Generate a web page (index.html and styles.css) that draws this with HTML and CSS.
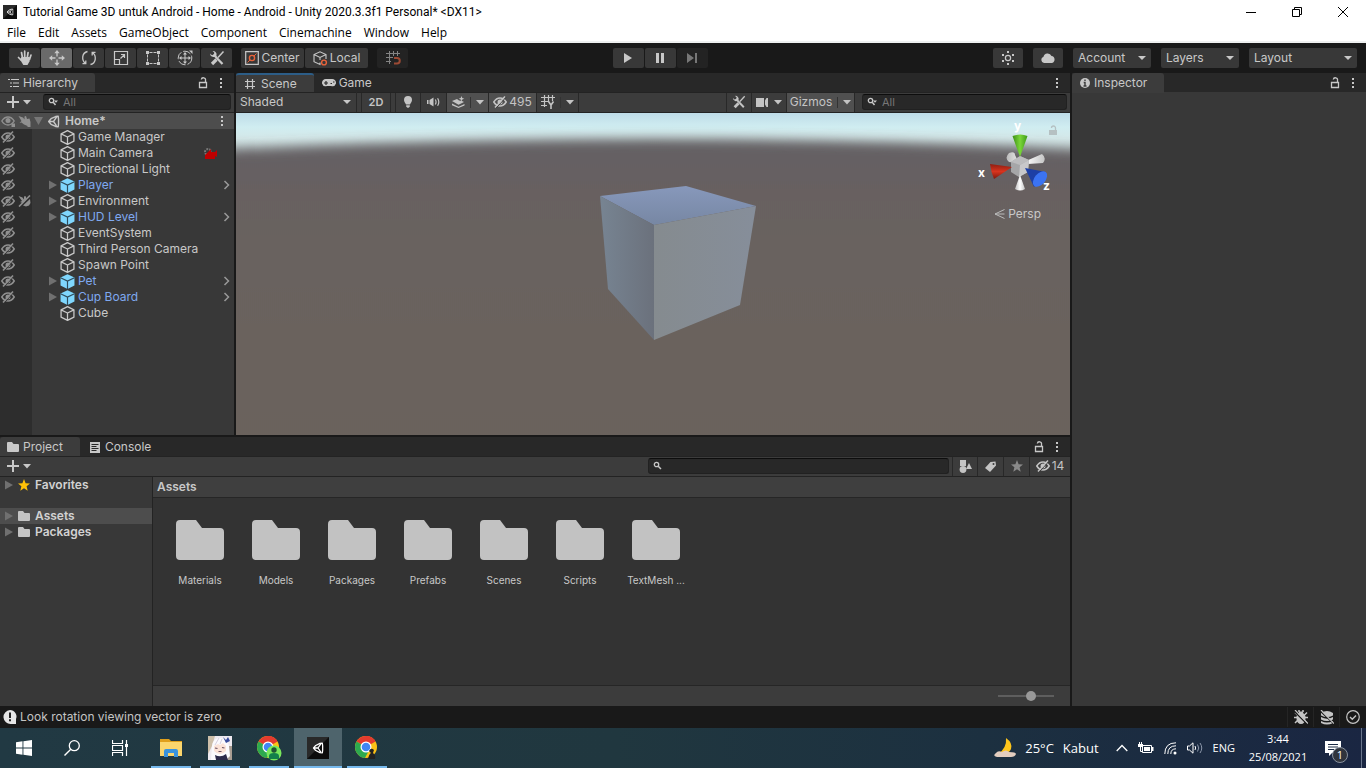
FILE: index.html
```html
<!DOCTYPE html>
<html lang="en">
<head>
<meta charset="utf-8">
<title>Tutorial Game 3D untuk Android - Home - Android - Unity 2020.3.3f1 Personal* &lt;DX11&gt;</title>
<link rel="stylesheet" href="styles.css">
</head>
<body>
<svg class="defs" aria-hidden="true">
  <symbol id="unity" viewBox="0 0 16 16"><g fill="none" stroke="currentColor" stroke-width="1.7" stroke-linejoin="round"><path d="M5 4.600 10.600 1.900l3.200-.3.400 3.400v6l-.4 3.400-3.200-.3L5 11.400 2 8zM8 8H2.500M8 8l3.800-5.500M8 8l3.800 5.500"/></g></symbol>
  <symbol id="lock" viewBox="0 0 10 12"><path d="M1.500 5.500h7v5h-7zM7.500 5.500V3.300a2 2 0 0 0-4.200-.8" fill="none" stroke="currentColor" stroke-width="1.300"/></symbol>
  <symbol id="dots" viewBox="0 0 4 12"><path d="M1 1h2v2H1zM1 5h2v2H1zM1 9h2v2H1z" fill="currentColor"/></symbol>
  <symbol id="plus" viewBox="0 0 12 12"><path d="M6 0v12M0 6h12" stroke="currentColor" stroke-width="2"/></symbol>
  <symbol id="down" viewBox="0 0 8 5"><path d="M0 0h8L4 4.600z" fill="currentColor"/></symbol>
  <symbol id="right" viewBox="0 0 8 10"><path d="M0 .5v9L8 5z" fill="currentColor"/></symbol>
  <symbol id="chev" viewBox="0 0 7 10"><path d="M1.500 1 5.500 5l-4 4" fill="none" stroke="currentColor" stroke-width="1.500"/></symbol>
  <symbol id="mag" viewBox="0 0 10 10"><circle cx="3.500" cy="3.500" r="2.200" fill="none" stroke="currentColor" stroke-width="1.300"/><path d="M5.200 5.200 8 8" stroke="currentColor" stroke-width="1.500"/></symbol>
  <symbol id="magd" viewBox="0 0 10 10"><circle cx="3.500" cy="3.500" r="2.200" fill="none" stroke="currentColor" stroke-width="1.300"/><path d="M5.200 5.200 7.500 8" stroke="currentColor" stroke-width="1.500"/><path d="M6 3.500h4L8 5.700z" fill="currentColor"/></symbol>
  <symbol id="cube" viewBox="0 0 14 14"><path d="M7 .6 13 3.600v6.800L7 13.400 1 10.400V3.600zM1 3.600 7 6.500l6-2.900M7 6.500v6.900" fill="none" stroke="currentColor" stroke-width="1.200" stroke-linejoin="round"/></symbol>
  <symbol id="prefab" viewBox="0 0 14 14"><path d="M7 .2 13.500 3.300v7.500L7 14 .5 10.800V3.300z" fill="#7fd6fd"/><path d="M.5 3.500 7 6.600l6.500-3.100M7 6.600V14" fill="none" stroke="#2f4c5c" stroke-width="1.100"/></symbol>
  <symbol id="eye" viewBox="0 0 14 12"><path d="M.8 6C2.500 3.300 4.600 2 7 2s4.500 1.300 6.200 4C11.500 8.700 9.400 10 7 10S2.500 8.700.8 6z" fill="none" stroke="currentColor" stroke-width="1.400"/><circle cx="7" cy="5.500" r="2.500" fill="currentColor"/><path d="M10.500 8.500h3.500V12h-3.500z" fill="currentColor"/></symbol>
  <symbol id="eyeoff" viewBox="0 0 14 12"><path d="M.8 6C2.500 3.300 4.600 2 7 2s4.500 1.300 6.200 4C11.500 8.700 9.400 10 7 10S2.500 8.700.8 6z" fill="none" stroke="currentColor" stroke-width="1.500"/><circle cx="7" cy="6" r="2.500" fill="currentColor"/><path d="M3.200 11.900 13 1.200" stroke="#333" stroke-width="1"/><path d="M2 11.500 12 .5" stroke="currentColor" stroke-width="1.500"/></symbol>
  <symbol id="pick" viewBox="0 0 13 12"><path d="M.5 1 5 2.500 6.500 4.500V1.500L8 1l1 3 2.500-.5 1 3.500v5H9.500V11L6 9.500 3.500 7.500 1.500 8l2-2z" fill="currentColor"/></symbol>
  <symbol id="pickoff" viewBox="0 0 13 12"><path d="M.5 1 4.500 2.500 6 4.500V1.500L7.500 1l1 2.500L7 6 4.500 8 2 7l2-1zM12 4l.5 4-1.500 2.500-3 1-3-1z" fill="currentColor"/><path d="M1 11.500 12 .5" stroke="currentColor" stroke-width="1.600"/></symbol>
  <symbol id="folder" viewBox="0 0 48 40"><path d="M4 0h16l6 8h18a4 4 0 0 1 4 4v24a4 4 0 0 1-4 4H4a4 4 0 0 1-4-4V4a4 4 0 0 1 4-4z" fill="currentColor"/></symbol>
  <symbol id="star" viewBox="0 0 12 12"><path d="M6 0 7.600 4.200 12 4.500 8.600 7.300 9.700 11.800 6 9.300l-3.700 2.500 1.100-4.500L0 4.500l4.400-.3z" fill="currentColor"/></symbol>
  <symbol id="tools" viewBox="0 0 16 16"><path d="M4.500 4.500 13.500 14" stroke="currentColor" stroke-width="2.200"/><path d="M1 3.500 3 5.200 5 4.500 5.200 2.500 3.500 1a3.600 3.600 0 0 1 4 4.500A3.600 3.600 0 0 1 1 3.500z" fill="currentColor"/><path d="M14.500 1.500 9 7.500" stroke="currentColor" stroke-width="1.500"/><path d="M7.500 9.500 3 14" stroke="currentColor" stroke-width="3.200"/></symbol>
  <symbol id="chrome" viewBox="0 0 24 24"><circle cx="12" cy="12" r="11" fill="#fbc116"/><path d="M12 12 2.500 6.500A11 11 0 0 1 21.500 6.500z" fill="#e33b2e"/><path d="M2.500 6.500A11 11 0 0 0 11 23l4.500-8.500L12 12z" fill="#2da94f"/><path d="M12 1A11 11 0 0 1 21.500 6.500H12z" fill="#e33b2e"/><circle cx="12" cy="12" r="5.500" fill="#fff"/><circle cx="12" cy="12" r="4.300" fill="#3f86f4"/></symbol>
  <symbol id="unityapp" viewBox="0 0 22 22"><path d="M0 0h22v22H0z" fill="#0c0c0c"/><path d="M0 0h22L0 22z" fill="#292929"/><svg x="5" y="5" width="12" height="12"><use href="#unity"/></svg></symbol>
</svg>

<header class="titlebar">
  <svg class="app-icon"><use href="#unityapp"/></svg>
  <h1>Tutorial Game 3D untuk Android - Home - Android - Unity 2020.3.3f1 Personal* &lt;DX11&gt;</h1>
  <div class="win-buttons">
    <button aria-label="Minimize"><svg width="12" height="12" viewBox="0 0 12 12"><path d="M1 6.500h10" stroke="#000"/></svg></button>
    <button aria-label="Restore"><svg width="12" height="12" viewBox="0 0 12 12"><path d="M1.500 3.500h7v7h-7zM3.500 3.500v-2h7v7h-2" fill="none" stroke="#000"/></svg></button>
    <button aria-label="Close"><svg width="12" height="12" viewBox="0 0 12 12"><path d="m1 1 10 10M11 1 1 11" stroke="#000"/></svg></button>
  </div>
</header>
<nav class="menubar">
  <button>File</button><button>Edit</button><button>Assets</button><button>GameObject</button><button>Component</button><button>Cinemachine</button><button>Window</button><button>Help</button>
</nav>

<div class="toolbar">
  <div class="group">
    <button class="tool" aria-label="Hand"><svg width="16" height="16" viewBox="0 0 16 16"><path d="M5.500 8 4.500 2.500M7.700 7.500V1.200M10.200 8l.9-5.500M12.500 9.500 14 5M4 10 1.500 7.500" stroke="currentColor" stroke-width="1.700" stroke-linecap="round"/><path d="M4.500 7h8.300l-.3 4.500L10.500 15H6.300L3 9.500z" fill="currentColor"/></svg></button>
    <button class="tool active" aria-label="Move"><svg width="16" height="16" viewBox="0 0 16 16"><path d="M8 2v4.500M8 9.500V14M2 8h4.500M9.500 8H14" stroke="currentColor" stroke-width="1.300"/><path d="M8 0 5.300 3.200h5.400zM8 16l-2.700-3.200h5.400zM0 8l3.200-2.700v5.400zM16 8l-3.200-2.700v5.400z" fill="currentColor"/></svg></button>
    <button class="tool" aria-label="Rotate"><svg width="16" height="16" viewBox="0 0 16 16"><path d="M6.500 1.500C.5 3 .5 10.500 4.500 13.500M1.500 13.700h3.300v-3.200M9.500 14.500c6-1.500 6-9 2-12M14.500 2.300h-3.300v3.200" fill="none" stroke="currentColor" stroke-width="1.300"/></svg></button>
    <button class="tool" aria-label="Scale"><svg width="16" height="16" viewBox="0 0 16 16"><path d="M1.500 1.500h13v13h-13zM1.500 9.500h5v5M7.500 8.500l4-4M8 4.500h3.500V8" fill="none" stroke="currentColor" stroke-width="1.200"/></svg></button>
    <button class="tool" aria-label="Rect"><svg width="16" height="16" viewBox="0 0 16 16"><path d="M4.500 2.500h7M4.500 13.500h7M2.500 4.500v7M13.500 4.500v7" stroke="currentColor" stroke-dasharray="3 1"/><path d="M1 1h3v3H1zM12 1h3v3h-3zM1 12h3v3H1zM12 12h3v3h-3z" fill="currentColor"/></svg></button>
    <button class="tool" aria-label="Transform"><svg width="16" height="16" viewBox="0 0 16 16"><circle cx="8" cy="8" r="6.800" fill="none" stroke="currentColor" stroke-dasharray="8 2"/><path d="M8 3v10M3 8h10" stroke="currentColor"/><path d="M8 2 6 4.500h4zM8 14l-2-2.500h4zM2 8l2.500-2v4zM14 8l-2.500-2v4zM12 .5h3.500V4z" fill="currentColor"/></svg></button>
    <button class="tool" aria-label="Custom tools"><svg width="16" height="16"><use href="#tools"/></svg></button>
  </div>
  <div class="group pivot">
    <button class="wide"><svg width="14" height="14" viewBox="0 0 14 14"><path d="M.7.7h12.600v12.600H.7z" fill="none" stroke="currentColor" stroke-width="1.200"/><circle cx="7" cy="7" r="2.600" fill="none" stroke="#e9633a" stroke-width="1.400"/><path d="M9 5l2.500-2.500M5 9l-2.500 2.500" stroke="#e9633a"/></svg>Center</button>
    <button class="wide"><svg width="15" height="15" viewBox="0 0 15 15"><path d="M7 11.500v2L1 10.700V3.500L7 .8l6 2.700V8M1 3.500l6 3 6-3M7 6.500V9" fill="none" stroke="currentColor" stroke-width="1.100"/><circle cx="11" cy="11.500" r="2.400" fill="none" stroke="#e9633a" stroke-width="1.400"/></svg>Local</button>
  </div>
  <button class="tool dim" aria-label="Grid snapping"><svg width="16" height="16" viewBox="0 0 16 16"><path d="M4.500 1v13M8.500 1v5M12.500 1v5M1 3.500h14M1 7.500h7M1 11.500h5" stroke="#858585"/><path d="M9 8h3a2.500 2.500 0 0 1 0 5.500H9" fill="none" stroke="#9c4a34" stroke-width="2"/></svg></button>
  <div class="group play">
    <button class="tool" aria-label="Play"><svg width="10" height="12" viewBox="0 0 10 12"><path d="M1 1v10l8-5z" fill="currentColor"/></svg></button>
    <button class="tool" aria-label="Pause"><svg width="10" height="12" viewBox="0 0 10 12"><path d="M1 1h3v10H1zM6 1h3v10H6z" fill="currentColor"/></svg></button>
    <button class="tool dim" aria-label="Step"><svg width="12" height="12" viewBox="0 0 12 12"><path d="M1 1v10l7-5zM9 1h2v10H9z" fill="#777"/></svg></button>
  </div>
  <div class="group services">
    <button class="tool" aria-label="Collaborate"><svg width="16" height="16" viewBox="0 0 16 16"><circle cx="8" cy="8" r="2.600" fill="none" stroke="currentColor" stroke-width="1.200"/><path d="M7 1h2v2H7zM7 13h2v2H7zM2 4h2v2H2zM12 4h2v2h-2zM2 10h2v2H2zM12 10h2v2h-2z" fill="currentColor"/></svg></button>
    <button class="tool" aria-label="Cloud"><svg width="16" height="12" viewBox="0 0 16 12"><path d="M4 11a3.200 3.200 0 0 1-.5-6.200A4.200 4.200 0 0 1 11.500 4 3.600 3.600 0 0 1 12 11z" fill="currentColor"/></svg></button>
    <label class="picker"><select aria-label="Account"><option>Account</option></select></label>
    <label class="picker"><select aria-label="Layers"><option>Layers</option></select></label>
    <label class="picker layout"><select aria-label="Layout"><option>Layout</option></select></label>
  </div>
</div>

<main class="workspace">
  <div class="main-col">
    <div class="upper">
      <section class="panel hierarchy">
        <div class="tabs">
          <button class="tab active"><svg width="11" height="10" viewBox="0 0 11 10"><path d="M0 1.500h2M3 1.500h8M2 5h2M5 5h6M2 8.500h2M5 8.500h6" stroke="currentColor" stroke-width="1.200"/></svg>Hierarchy</button>
          <div class="tab-actions"><svg width="10" height="12"><use href="#lock"/></svg><svg width="4" height="12"><use href="#dots"/></svg></div>
        </div>
        <div class="bar">
          <button class="add" aria-label="Create"><svg width="12" height="12"><use href="#plus"/></svg><svg width="8" height="5"><use href="#down"/></svg></button>
          <label class="search"><svg width="10" height="10"><use href="#magd"/></svg><input type="text" placeholder="All" aria-label="Search hierarchy"></label>
        </div>
        <div class="row scene-row"><span class="gutter"><svg width="14" height="12"><use href="#eye"/></svg><svg width="13" height="12"><use href="#pick"/></svg></span><svg class="fold-open" width="9" height="8" viewBox="0 0 9 8"><path d="M0 0h9L4.500 8z" fill="#777"/></svg><svg class="scene-logo" width="13" height="13"><use href="#unity"/></svg><b>Home*</b><svg class="row-dots" width="4" height="12"><use href="#dots"/></svg></div>
        <ul class="tree">
          <li class="row"><span class="gutter"><svg width="14" height="12"><use href="#eyeoff"/></svg></span><span class="fold"></span><svg class="node"><use href="#cube"/></svg><span>Game Manager</span></li>
          <li class="row"><span class="gutter"><svg width="14" height="12"><use href="#eyeoff"/></svg></span><span class="fold"></span><svg class="node"><use href="#cube"/></svg><span>Main Camera</span><svg class="cine" width="15" height="13" viewBox="0 0 15 13"><circle cx="5" cy="5" r="3" fill="none" stroke="#777" stroke-width="2" stroke-dasharray="2 1"/><path d="M2 8 8 2v3h4l2-2v7l-2-1v3H2z" fill="#c00000"/></svg></li>
          <li class="row"><span class="gutter"><svg width="14" height="12"><use href="#eyeoff"/></svg></span><span class="fold"></span><svg class="node"><use href="#cube"/></svg><span>Directional Light</span></li>
          <li class="row prefab"><span class="gutter"><svg width="14" height="12"><use href="#eyeoff"/></svg></span><span class="fold"><svg width="8" height="10"><use href="#right"/></svg></span><svg class="node"><use href="#prefab"/></svg><span>Player</span><svg class="open" width="7" height="10"><use href="#chev"/></svg></li>
          <li class="row"><span class="gutter"><svg width="14" height="12"><use href="#eyeoff"/></svg><svg width="13" height="12"><use href="#pickoff"/></svg></span><span class="fold"><svg width="8" height="10"><use href="#right"/></svg></span><svg class="node"><use href="#cube"/></svg><span>Environment</span></li>
          <li class="row prefab"><span class="gutter"><svg width="14" height="12"><use href="#eyeoff"/></svg></span><span class="fold"><svg width="8" height="10"><use href="#right"/></svg></span><svg class="node"><use href="#prefab"/></svg><span>HUD Level</span><svg class="open" width="7" height="10"><use href="#chev"/></svg></li>
          <li class="row"><span class="gutter"><svg width="14" height="12"><use href="#eyeoff"/></svg></span><span class="fold"></span><svg class="node"><use href="#cube"/></svg><span>EventSystem</span></li>
          <li class="row"><span class="gutter"><svg width="14" height="12"><use href="#eyeoff"/></svg></span><span class="fold"></span><svg class="node"><use href="#cube"/></svg><span>Third Person Camera</span></li>
          <li class="row"><span class="gutter"><svg width="14" height="12"><use href="#eyeoff"/></svg></span><span class="fold"></span><svg class="node"><use href="#cube"/></svg><span>Spawn Point</span></li>
          <li class="row prefab"><span class="gutter"><svg width="14" height="12"><use href="#eyeoff"/></svg></span><span class="fold"><svg width="8" height="10"><use href="#right"/></svg></span><svg class="node"><use href="#prefab"/></svg><span>Pet</span><svg class="open" width="7" height="10"><use href="#chev"/></svg></li>
          <li class="row prefab"><span class="gutter"><svg width="14" height="12"><use href="#eyeoff"/></svg></span><span class="fold"><svg width="8" height="10"><use href="#right"/></svg></span><svg class="node"><use href="#prefab"/></svg><span>Cup Board</span><svg class="open" width="7" height="10"><use href="#chev"/></svg></li>
          <li class="row"><span class="gutter"></span><span class="fold"></span><svg class="node"><use href="#cube"/></svg><span>Cube</span></li>
        </ul>
      </section>

      <section class="panel scene">
        <div class="tabs">
          <button class="tab active focus"><svg width="12" height="12" viewBox="0 0 12 12"><path d="M3.500 1v10M8.500 1v10M1 3.500h10M1 8.500h10" stroke="currentColor" stroke-width="1.200"/></svg>Scene</button>
          <button class="tab game"><svg width="14" height="9" viewBox="0 0 14 9"><path d="M4 0h6a4 4 0 0 1 4 4.500A4 4 0 0 1 9 7H5A4 4 0 0 1 0 4.500 4 4 0 0 1 4 0z" fill="currentColor"/><path d="M2 4h4M4 2v4M8.500 4.500h1.500M11 3h1.500" stroke="#282828" stroke-width="1.200"/></svg>Game</button>
          <div class="tab-actions"><svg width="4" height="12"><use href="#dots"/></svg></div>
        </div>
        <div class="bar scene-bar">
          <label class="picker shading"><select aria-label="Draw mode"><option>Shaded</option></select></label>
          <button class="cell two-d"><b>2D</b></button>
          <button class="cell" aria-label="Lighting"><svg width="10" height="14" viewBox="0 0 10 14"><path d="M5 1a4 4 0 0 1 4 4c0 2-1.500 3-2 4.500H3C2.500 8 1 7 1 5a4 4 0 0 1 4-4zM3.200 10.200h3.600v1.500L5 13l-1.800-1.300z" fill="currentColor"/></svg></button>
          <button class="cell" aria-label="Audio"><svg width="13" height="10" viewBox="0 0 13 10"><path d="M0 3h1.500v4H0zM2.500 3 6.500.5v9L2.500 7z" fill="currentColor"/><path d="M8.300 2.500q1.500 2.500 0 5M10.600 1.200q2.400 3.800 0 7.600" fill="none" stroke="currentColor" stroke-width="1.200"/></svg></button>
          <button class="cell on split" aria-label="Effects"><svg width="13" height="12" viewBox="0 0 13 12"><path d="M0 5 5 3l2 1.500 3 .5 2 1-5.500 2.800zM0 7.500l6.500 3.300L12.500 8v1.500L6.500 12 0 9.200z" fill="currentColor"/><path d="m9.500 0 .8 2 2 .8-2 .8-.8 2-.8-2-2-.8 2-.8z" fill="currentColor"/></svg><i></i><svg width="8" height="5"><use href="#down"/></svg></button>
          <button class="cell on hidden-count"><svg width="14" height="12"><use href="#eyeoff"/></svg>495</button>
          <button class="cell split" aria-label="Grid"><svg width="14" height="14" viewBox="0 0 14 14"><path d="M3.500 0v12M7.500 0v6M11.500 0v6M0 2.500h14M0 6.500h8M0 10.500h6" stroke="currentColor" stroke-width="1.200"/><path d="M7.500 6.500 10 10l2.500-3.500M10 10v4" fill="none" stroke="currentColor" stroke-width="1.600"/></svg><i></i><svg width="8" height="5"><use href="#down"/></svg></button>
          <span class="grow"></span>
          <button class="cell edge" aria-label="Component tools"><svg width="14" height="14"><use href="#tools"/></svg></button>
          <button class="cell cam" aria-label="Camera"><svg width="13" height="9" viewBox="0 0 13 9"><path d="M0 0h8v9H0zM9 2.500 10.500 0H12v9h-1.500L9 6.500z" fill="currentColor"/></svg><svg width="8" height="5"><use href="#down"/></svg></button>
          <button class="cell on gizmos">Gizmos<i></i><svg width="8" height="5"><use href="#down"/></svg></button>
          <label class="search"><svg width="10" height="10"><use href="#magd"/></svg><input type="text" placeholder="All" aria-label="Search scene"></label>
        </div>
        <div class="viewport">
          <svg class="world" viewBox="0 0 834 322" preserveAspectRatio="xMidYMid slice">
            <defs>
              <linearGradient id="sky" x1="0" y1="0" x2="0" y2="1"><stop offset="0" stop-color="#bedce8"/><stop offset=".28" stop-color="#d0edf1"/><stop offset=".5" stop-color="#d4e8e9"/><stop offset="1" stop-color="#a9b2b3"/></linearGradient>
              <linearGradient id="ground" x1="0" y1="0" x2="0" y2="1"><stop offset="0" stop-color="#646064"/><stop offset=".1" stop-color="#666162"/><stop offset=".3" stop-color="#69625e"/><stop offset="1" stop-color="#6b625c"/></linearGradient>
              <linearGradient id="top" x1="0" y1="0" x2="0" y2="1"><stop offset="0" stop-color="#8798bb"/><stop offset="1" stop-color="#7787a3"/></linearGradient>
              <linearGradient id="left"><stop offset="0" stop-color="#778492"/><stop offset="1" stop-color="#6b717c"/></linearGradient>
              <linearGradient id="front"><stop offset="0" stop-color="#858b8f"/><stop offset="1" stop-color="#868e9a"/></linearGradient>
              <filter id="haze" x="-5%" y="-10%" width="110%" height="120%"><feGaussianBlur stdDeviation="6"/></filter>
            </defs>
            <path d="M0 0h834v50H0z" fill="url(#sky)"/>
            <path d="M-60 40Q417 12 894 40V380H-60z" fill="url(#ground)" filter="url(#haze)"/>
            <path d="M364 83 450 73 520 93 418 112z" fill="url(#top)"/>
            <path d="M364 83 418 112V227L372 176z" fill="url(#left)"/>
            <path d="M418 112 520 93 504 192 418 227z" fill="url(#front)"/>
          </svg>
          <div class="gizmo">
            <svg width="80" height="78" viewBox="0 0 80 78">
              <defs>
                <linearGradient id="gy"><stop offset="0" stop-color="#3c8f16"/><stop offset=".5" stop-color="#7ad63a"/><stop offset="1" stop-color="#3f9a18"/></linearGradient>
                <linearGradient id="gx" x1="0" y1="0" x2="0" y2="1"><stop offset="0" stop-color="#8e1d10"/><stop offset=".5" stop-color="#d8341e"/><stop offset="1" stop-color="#7c190d"/></linearGradient>
                <linearGradient id="gw"><stop offset="0" stop-color="#bbb"/><stop offset=".5" stop-color="#fff"/><stop offset="1" stop-color="#c4c4c4"/></linearGradient>
              </defs>
              <path d="M43 43 33 42q-5-4 0-9 6-2 6 2zM50 41 66 34q5 4 1 9l-15 1z" fill="url(#gw)"/>
              <path d="m35 42 9-6 9 4-1 12-9 5-8-5z" fill="#a6a6a8"/><path d="m35 42 9-6 9 4-9 5z" fill="#bcbcbe"/><path d="m44 45 9-5-1 12-9 5z" fill="#c8c8ca"/>
              <path d="m44 55 5 14q-5 3-10 0z" fill="url(#gw)"/>
              <path d="m44 37-7.500-21q8-3 15 0z" fill="url(#gy)"/>
              <path d="M36 47 14 44q1 8 4 15z" fill="url(#gx)"/>
              <path d="m49 48 21 4-12 15z" fill="#1d3fa5"/><ellipse cx="64" cy="59" rx="5.500" ry="9" transform="rotate(40 64 59)" fill="#3b73f2"/>
            </svg>
            <span class="axis x">x</span><span class="axis y">y</span><span class="axis z">z</span>
          </div>
          <svg class="view-lock" width="10" height="12" viewBox="0 0 10 12"><path d="M1 5h8v5H1z" fill="#b5c0c2"/><path d="M7.500 5V3a2 2 0 0 0-4 0" fill="none" stroke="#b5c0c2" stroke-width="1.300"/></svg>
          <button class="persp"><svg width="11" height="10" viewBox="0 0 11 10"><path d="M10.500.5 1 5l9.500 4.500M1 5h9.500" fill="none" stroke="#bbb"/></svg>Persp</button>
        </div>
      </section>
    </div>

    <section class="panel project">
      <div class="tabs">
        <button class="tab active"><svg width="12" height="10"><use href="#folder"/></svg>Project</button>
        <button class="tab console"><svg width="10" height="11" viewBox="0 0 10 11"><path d="M0 0h10v11H0z" fill="currentColor"/><path d="M1.500 2.500h7M1.500 4.500h5M1.500 6.500h7M1.500 8.500h5" stroke="#282828"/></svg>Console</button>
        <div class="tab-actions"><svg width="10" height="12"><use href="#lock"/></svg><svg width="4" height="12"><use href="#dots"/></svg></div>
      </div>
      <div class="bar">
        <button class="add" aria-label="Create"><svg width="12" height="12"><use href="#plus"/></svg><svg width="8" height="5"><use href="#down"/></svg></button>
        <span class="grow"></span>
        <label class="search assets-search"><svg width="10" height="10"><use href="#mag"/></svg><input type="text" aria-label="Search assets"></label>
        <button class="cell edge" aria-label="Search by type"><svg width="13" height="13" viewBox="0 0 13 13"><path d="M1 0h6v6H1z" fill="currentColor"/><path d="m10 3 3 6H7z" fill="currentColor"/><circle cx="4" cy="9.500" r="3.400" fill="currentColor"/></svg></button>
        <button class="cell" aria-label="Search by label"><svg width="12" height="11" viewBox="0 0 12 11"><path d="M5.500 1 10.500.5 11 4.500 5 11 0 7z" fill="currentColor"/><circle cx="8.500" cy="3" r="1" fill="#3c3c3c"/></svg></button>
        <button class="cell faded" aria-label="Favorite"><svg width="12" height="12"><use href="#star"/></svg></button>
        <button class="cell last"><svg width="14" height="12"><use href="#eyeoff"/></svg>14</button>
      </div>
      <div class="browser">
        <ul class="places">
          <li><svg width="8" height="10"><use href="#right"/></svg><svg class="ico gold" width="12" height="12"><use href="#star"/></svg>Favorites</li>
          <li class="selected"><svg width="8" height="10"><use href="#right"/></svg><svg class="ico" width="12" height="10"><use href="#folder"/></svg>Assets</li>
          <li><svg width="8" height="10"><use href="#right"/></svg><svg class="ico" width="12" height="10"><use href="#folder"/></svg>Packages</li>
        </ul>
        <div class="contents">
          <h2>Assets</h2>
          <ul class="grid">
            <li><svg><use href="#folder"/></svg>Materials</li>
            <li><svg><use href="#folder"/></svg>Models</li>
            <li><svg><use href="#folder"/></svg>Packages</li>
            <li><svg><use href="#folder"/></svg>Prefabs</li>
            <li><svg><use href="#folder"/></svg>Scenes</li>
            <li><svg><use href="#folder"/></svg>Scripts</li>
            <li><svg><use href="#folder"/></svg>TextMesh ...</li>
          </ul>
          <div class="foot"><input type="range" min="0" max="100" value="60" aria-label="Icon size"></div>
        </div>
      </div>
    </section>
  </div>

  <section class="panel inspector">
    <div class="tabs">
      <button class="tab active"><svg width="10" height="10" viewBox="0 0 10 10"><circle cx="5" cy="5" r="5" fill="currentColor"/><path d="M5 1.500v1.500M3.700 4.500H5V8M3.500 8h3" stroke="#3c3c3c" stroke-width="1.400" fill="none"/></svg>Inspector</button>
      <div class="tab-actions"><svg width="10" height="12"><use href="#lock"/></svg><svg width="4" height="12"><use href="#dots"/></svg></div>
    </div>
  </section>
</main>

<footer class="status">
  <svg width="14" height="15" viewBox="0 0 14 15"><path d="M7 0a6.500 6.500 0 0 1 6 9v5H8A6.600 6.600 0 1 1 7 0z" fill="#e6e6e6"/><path d="M7 2.500v5.500M7 9.300v2" stroke="#222" stroke-width="2"/></svg>
  <span class="message">Look rotation viewing vector is zero</span>
  <button aria-label="Debugger"><svg width="14" height="15" viewBox="0 0 14 15"><path d="M7 2.500a5 5 0 0 1 4.500 6 4.500 5.500 0 0 1-9 0A5 5 0 0 1 7 2.500zM4.500 1.500h5L8.500 4h-3z" fill="currentColor"/><path d="M0 7.500h14M1 2.500l3 3M13 2.500l-3 3M1 13l3-3M13 13l-3-3M5 0v2M9 0v2" stroke="currentColor" stroke-width="1.500"/><path d="m0 1 13 13" stroke="#191919" stroke-width="1.500"/><path d="m1 0 13 13.500" stroke="currentColor" stroke-width="1.200"/></svg></button>
  <button aria-label="Cache server"><svg width="14" height="15" viewBox="0 0 14 15"><path d="M1 3q6-4 12 0v2.500q-6 3-12 0zM1 7q6 3.500 12 0v2.500q-6 3-12 0zM1 11q6 3 12 0v2q-6 3-12 0z" fill="currentColor"/><path d="m0 1 14 13" stroke="#191919" stroke-width="1.200"/><path d="m1 0 13 13.500" stroke="currentColor" stroke-width="1.200"/></svg></button>
  <button aria-label="Progress"><svg width="14" height="14" viewBox="0 0 14 14"><circle cx="7" cy="7" r="6.300" fill="none" stroke="currentColor" stroke-width="1.200"/><path d="m4 7 2.300 2.300L10 5.500" fill="none" stroke="currentColor" stroke-width="1.400"/></svg></button>
</footer>

<div class="taskbar">
  <button class="task" aria-label="Start"><svg width="16" height="16" viewBox="0 0 16 16"><path d="M0 2.200 6.500 1.300v6.200H0zM7.400 1.200 16 0v7.500H7.400zM0 8.500h6.500v6.200L0 13.800zM7.400 8.500H16V16l-8.600-1.200z" fill="#fff"/></svg></button>
  <button class="task" aria-label="Search"><svg width="16" height="16" viewBox="0 0 16 16"><circle cx="10.300" cy="5.700" r="5" fill="none" stroke="#fff" stroke-width="1.300"/><path d="M6.800 9.200.5 15.500" stroke="#fff" stroke-width="1.400"/></svg></button>
  <button class="task" aria-label="Task view"><svg width="16" height="16" viewBox="0 0 16 16"><path d="M.5 0v3.500h10V0M.5 16v-3.500h10V16M.5 5.500h10v5H.5zM14.500 0v16" fill="none" stroke="#fff" stroke-width="1.200"/><path d="M13 4h3v3h-3z" fill="#fff"/></svg></button>
  <div class="apps">
    <button class="task open-app" aria-label="File Explorer"><svg width="22" height="20" viewBox="0 0 22 20"><path d="M0 1h9l2 2h11v6H0z" fill="#e0a01c"/><path d="M0 4h22v14H0z" fill="#fbd66d"/><path d="M4 19v-6q0-2 2-2h10q2 0 2 2v6h-4v-4H8v4z" fill="#3a93dc"/></svg></button>
    <button class="task open-app" aria-label="Game"><svg width="24" height="24" viewBox="0 0 24 24"><path d="M0 0h24v24H0z" fill="#eeeaf0"/><path d="M0 0h7L4 10 0 18z" fill="#cdbfa9"/><path d="M20 10h4v14h-5z" fill="#a89d92"/><path d="M4 10Q5 2 12 2t9 8l1 10-4 4H3z" fill="#fbfafd"/><path d="M6 10l4-2 2 1 3-2 3 3v5q-6 6-12 0z" fill="#fbe3d8"/><path d="m7 12 2.500.5M14 11.500l2.500.5M10.500 15.500h3" stroke="#6a5162" stroke-width="1.200"/><path d="M7 19q6 3 11-1l2 6H8z" fill="#2c2a4a"/><path d="m15 1 3 3 2-3 2 4-4 2z" fill="#384c9c"/><path d="M11 2 7 9M14 3l-2 5" stroke="#d6d0e0"/></svg></button>
    <button class="task open-app" aria-label="Chrome profile 1"><svg width="26" height="26" viewBox="0 0 26 26"><svg width="24" height="24"><use href="#chrome"/></svg><circle cx="18" cy="18" r="7.500" fill="#79e85c"/><circle cx="18" cy="15" r="2.700" fill="#1f5435"/><path d="M13 24v-3q0-3 5-3t5 3v3z" fill="#12804a"/></svg></button>
    <button class="task open-app current" aria-label="Unity"><svg width="22" height="22"><use href="#unityapp"/></svg></button>
    <button class="task open-app" aria-label="Chrome profile 2"><svg width="26" height="26" viewBox="0 0 26 26"><svg width="24" height="24"><use href="#chrome"/></svg><path d="M14 24q1-5 3-6l-2-2q2-4 5-1l-1 3q3 2 2 6z" fill="#222"/></svg></button>
  </div>
  <div class="tray">
    <button class="weather"><svg width="22" height="20" viewBox="0 0 22 20"><path d="M12 0q7 5 5 11t-13 5Q13 10 12 0z" fill="#fdc51b"/><path d="M3 19q-5-1-1-4 2-3 6-1 4-3 7 0 7 0 7 2-1 3-5 3z" fill="#e2cdbf"/></svg><span>25°C</span><span>Kabut</span></button>
    <svg width="12" height="8" viewBox="0 0 12 8"><path d="m.7 7 5.300-5.500L11.300 7" fill="none" stroke="#fff" stroke-width="1.300"/></svg>
    <svg width="16" height="13" viewBox="0 0 16 13"><path d="M4.500 3.500h9v7h-9z" fill="none" stroke="#fff"/><path d="M6 5h6v4H6zM14 5h1.500v4H14zM0 2h5v3H0z" fill="#fff"/><path d="M1.500 0v2M3.500 0v2M2.500 5v4.500h2" fill="none" stroke="#fff"/></svg>
    <svg width="13" height="13" viewBox="0 0 13 13"><path d="M.8 12Q.8.8 12 .8M3.800 12Q3.800 3.800 12 3.800M6.800 12q0-5.200 5.200-5.200" fill="none" stroke="#fff"/><circle cx="11" cy="11" r="1.500" fill="#fff"/></svg>
    <svg width="16" height="12" viewBox="0 0 16 12"><path d="M.5 4h2L6 .8v10.400L2.500 8h-2z" fill="none" stroke="#fff"/><path d="M8 4q1.300 2 0 4" fill="none" stroke="#fff"/><path d="M10.500 2.500q2.500 3.500 0 7M13 1q3.500 5 0 10" fill="none" stroke="#8d98ab"/></svg>
    <button class="lang">ENG</button>
    <button class="clock"><span>3:44</span><span>25/08/2021</span></button>
    <button class="notice" aria-label="1 notification"><svg width="16" height="15" viewBox="0 0 16 15"><path d="M0 0h16v12H7l-3 3v-3H0z" fill="#fff"/><path d="M3 3.500h10M3 6h10M3 8.500h6" stroke="#1b2b45"/></svg><span class="count">1</span></button>
  </div>
</div>
</body>
</html>
```

FILE: styles.css
```css
* { box-sizing: border-box; }
body {
  margin: 0;
  height: 100vh;
  display: flex;
  flex-direction: column;
  overflow: hidden;
  background: #191919;
  color: #c8c8c8;
  font: 12px/16px Inter, "Liberation Sans", sans-serif;
}
button, select, input { font: inherit; color: inherit; }
button { border: 0; padding: 0; background: none; white-space: nowrap; }
ul { list-style: none; margin: 0; padding: 0; }
h1, h2 { margin: 0; }
svg { display: block; flex: none; }
b { font-weight: 600; }
.defs { position: absolute; width: 0; height: 0; }
.grow { flex: 1; }

/* Window frame */
.titlebar, .menubar { background: #fff; color: #000; }
.titlebar { display: flex; align-items: center; height: 23px; flex: none; padding-left: 3px; gap: 6px; }
.titlebar h1 { flex: 1; font: 400 12px/16px Roboto, "Open Sans", sans-serif; }
.app-icon { width: 14px; height: 14px; color: #fff; }
.win-buttons { display: flex; }
.win-buttons button { width: 46px; height: 22px; display: grid; place-items: center; }
.menubar { display: flex; gap: 12px; height: 20px; flex: none; padding: 2px 0 0 7px; border-bottom: 2px solid #eef0f0; font-family: "Open Sans", "Noto Sans", sans-serif; }

/* Main toolbar */
.toolbar { display: flex; align-items: center; height: 30px; flex: none; padding: 0 9px; }
.group { display: flex; gap: 1px; }
.tool, .wide { display: flex; align-items: center; justify-content: center; height: 20px; background: #383838; border-radius: 2px; }
.tool { width: 31px; }
.tool.active { background: #6a6a6a; }
.tool.dim { background: #232323; }
.pivot { margin: 0 9px; }
.wide { width: 63px; gap: 2px; }
.play { margin-left: 15vw; }
.services { margin-left: auto; gap: 10px; }
.services .tool { width: 30px; }
.picker { position: relative; display: flex; flex: none; width: 78px; height: 20px; background: #383838; border-radius: 2px; }
.picker.layout { width: 108px; }
.picker select { width: 100%; appearance: none; border: 0; background: none; padding: 0 16px 0 5px; }
.picker::after { content: ""; position: absolute; right: 5px; top: 8px; border: 4px solid transparent; border-top-color: #c8c8c8; border-bottom: 0; }

/* Panels */
.workspace { flex: 1; min-height: 0; display: flex; gap: 2px; }
.main-col { flex: 1; min-width: 0; display: flex; flex-direction: column; gap: 2px; }
.upper { flex: 362; min-height: 0; display: flex; gap: 2px; }
.panel { display: flex; flex-direction: column; min-height: 0; min-width: 0; background: #383838; }
.hierarchy { width: 234px; flex: none; }
.scene { flex: 1; }
.project { flex: 269; }
.inspector { width: 294px; flex: none; }
.tabs { display: flex; height: 19px; flex: none; background: #282828; }
.tab { display: flex; align-items: center; gap: 4px; height: 20px; padding: 0 17px 0 8px; }
.tab.active { background: #3c3c3c; border-radius: 3px 3px 0 0; }
.tab.focus { border-top: 2px solid #2c5d87; gap: 5px; }
.tab.game { gap: 3px; }
.project .tab { padding-left: 7px; }
.tab.console { margin-left: 3px; gap: 5px; }
.tab-actions { margin-left: auto; display: flex; align-items: center; gap: 11px; padding-right: 11px; }
.bar { display: flex; align-items: center; height: 21px; flex: none; padding-bottom: 1px; background: #3c3c3c; border: solid #232323; border-width: 1px 0; }
.add { display: flex; flex: none; align-items: center; gap: 4px; width: 43px; padding-left: 7px; }
.search { flex: 1; min-width: 0; display: flex; align-items: center; gap: 5px; height: 16px; margin-right: 3px; padding-left: 4px; background: #282828; border: 1px solid #212121; border-top-color: #0d0d0d; border-radius: 3px; }
.search input { flex: 1; width: 0; min-width: 0; border: 0; padding: 0; background: none; height: 14px; outline: 0; font-size: 11px; }
.search input::placeholder { color: #777; }

/* Hierarchy */
.row { display: flex; align-items: center; height: 16px; }
.gutter { display: flex; align-items: center; gap: 3px; width: 32px; height: 16px; padding-left: 1px; color: #909090; flex: none; }
.tree { flex: 1; background: linear-gradient(90deg, #2d2d2d 32px, transparent 32px); }
.fold { width: 28px; padding-left: 17px; color: #707070; }
.node { width: 15px; height: 15px; margin-right: 3px; }
.scene-row { background: #4d4d4d; }
.fold-open { margin: 0 4px 0 2px; }
.scene-logo { margin-right: 5px; }
.row-dots { margin-left: auto; margin-right: 10px; }
.prefab { color: #7fa9f0; }
.open { margin-left: auto; margin-right: 4px; color: #999; }
.cine { margin-left: auto; margin-right: 16px; }

/* Scene */
.cell { display: flex; flex: none; align-items: center; justify-content: center; gap: 2px; width: 26px; height: 19px; border-right: 1px solid #282828; color: #c4c4c4; }
.cell.on { background: #505050; }
.cell.edge { border-left: 1px solid #282828; }
.cell.split { width: 42px; gap: 5px; }
.cell i { width: 1px; height: 11px; background: #333; }
.shading { width: 121px; border-right: 1px solid #282828; background: none; border-radius: 0; }
.shading select { padding-left: 4px; }
.two-d { width: 30px; margin: 0 4px; border-left: 1px solid #282828; font-size: 11px; }
.two-d + .cell { border-left: 1px solid #282828; }
.hidden-count { width: 48px; }
.cam { width: 35px; gap: 5px; }
.gizmos { width: 68px; gap: 5px; }
.scene-bar .search { flex: 0 1 205px; margin-left: 7px; }
.viewport { position: relative; flex: 1; min-height: 0; overflow: hidden; background: #69625d; }
.world { position: absolute; inset: 0; width: 100%; height: 100%; }
.gizmo { position: absolute; top: 7px; right: 14px; width: 80px; }
.axis { position: absolute; color: #fff; font: 700 12px/12px Inter, sans-serif; }
.axis.x { left: 2px; top: 47px; }
.axis.y { left: 38px; top: 0; }
.axis.z { left: 67px; top: 60px; }
.view-lock { position: absolute; top: 12px; right: 12px; }
.persp { position: absolute; top: 92px; right: 29px; display: flex; align-items: center; gap: 3px; height: 18px; }

/* Project */
.assets-search { flex: 0 1 301px; }
.cell.last { width: 40px; border-right: 0; }
.cell.faded { color: #8a8a8a; }
.browser { flex: 1; min-height: 0; display: flex; }
.places { width: 153px; flex: none; border-right: 1px solid #232323; font-weight: 600; }
.places li { display: flex; align-items: center; height: 16px; padding-left: 5px; color: #d2d2d2; }
.places li:first-child { margin-bottom: 15px; }
.places li > svg:first-child { color: #707070; }
.places .selected { background: #4d4d4d; }
.ico { margin: 0 5px; color: #c4c4c4; }
.places .gold { color: #ffc107; }
.contents { flex: 1; display: flex; flex-direction: column; background: #333; }
.contents h2 { height: 21px; padding-left: 4px; background: #3f3f3f; border-bottom: 1px solid #262626; font-size: 12px; line-height: 20px; font-weight: 600; }
.grid { flex: 1; display: flex; flex-wrap: wrap; align-content: flex-start; padding: 22px 9px; }
.grid li { width: 76px; display: flex; flex-direction: column; align-items: center; gap: 12px; font-size: 10px; }
.grid svg { width: 48px; height: 40px; color: #c2c2c2; }
.foot { display: flex; justify-content: flex-end; align-items: center; height: 21px; padding-right: 16px; background: #3c3c3c; border-top: 1px solid #262626; }
.foot input { appearance: none; width: 56px; height: 10px; margin: 0; background: linear-gradient(#5e5e5e, #5e5e5e) center / 100% 2px no-repeat; }
.foot input::-webkit-slider-thumb { appearance: none; width: 10px; height: 10px; border-radius: 50%; background: #999; }

/* Status line */
.status { display: flex; align-items: center; height: 22px; flex: none; padding-left: 3px; color: #c4c4c4; }
.message { flex: 1; padding-left: 3px; }
.status button { display: grid; place-items: center; width: 26px; height: 20px; border-left: 1px solid #252525; }
.status button:last-child { margin-right: 1px; }

/* Windows taskbar */
.taskbar { display: flex; height: 40px; flex: none; background: linear-gradient(90deg, #213943, #20373f 45%, #1c3040 72%, #1a2642); color: #fff; font: 11px/16px "Open Sans", "Noto Sans", sans-serif; }
.task { display: grid; place-items: center; width: 48px; height: 40px; }
.apps { display: flex; gap: 1px; margin-left: 3px; }
.open-app { background: linear-gradient(#76b9ed, #76b9ed) center bottom / 40px 2px no-repeat; }
.open-app.current { background: linear-gradient(#76b9ed, #76b9ed) center bottom / 48px 2px no-repeat #4e646c; }
.tray { margin-left: auto; display: flex; align-items: center; padding-right: 4px; gap: 10px; }
.weather { display: flex; align-items: center; gap: 9px; margin-right: 7px; font-size: 13px; }
.clock { display: flex; flex-direction: column; align-items: center; width: 66px; margin-right: 4px; line-height: 18px; }
.notice { position: relative; display: grid; place-items: center start; width: 37px; height: 40px; border-right: 1px solid #6a768c; }
.count { position: absolute; left: 7px; top: 19px; width: 16px; height: 16px; border: 1px solid #8a93a0; border-radius: 50%; background: #30343c; line-height: 14px; text-align: center; }
```
